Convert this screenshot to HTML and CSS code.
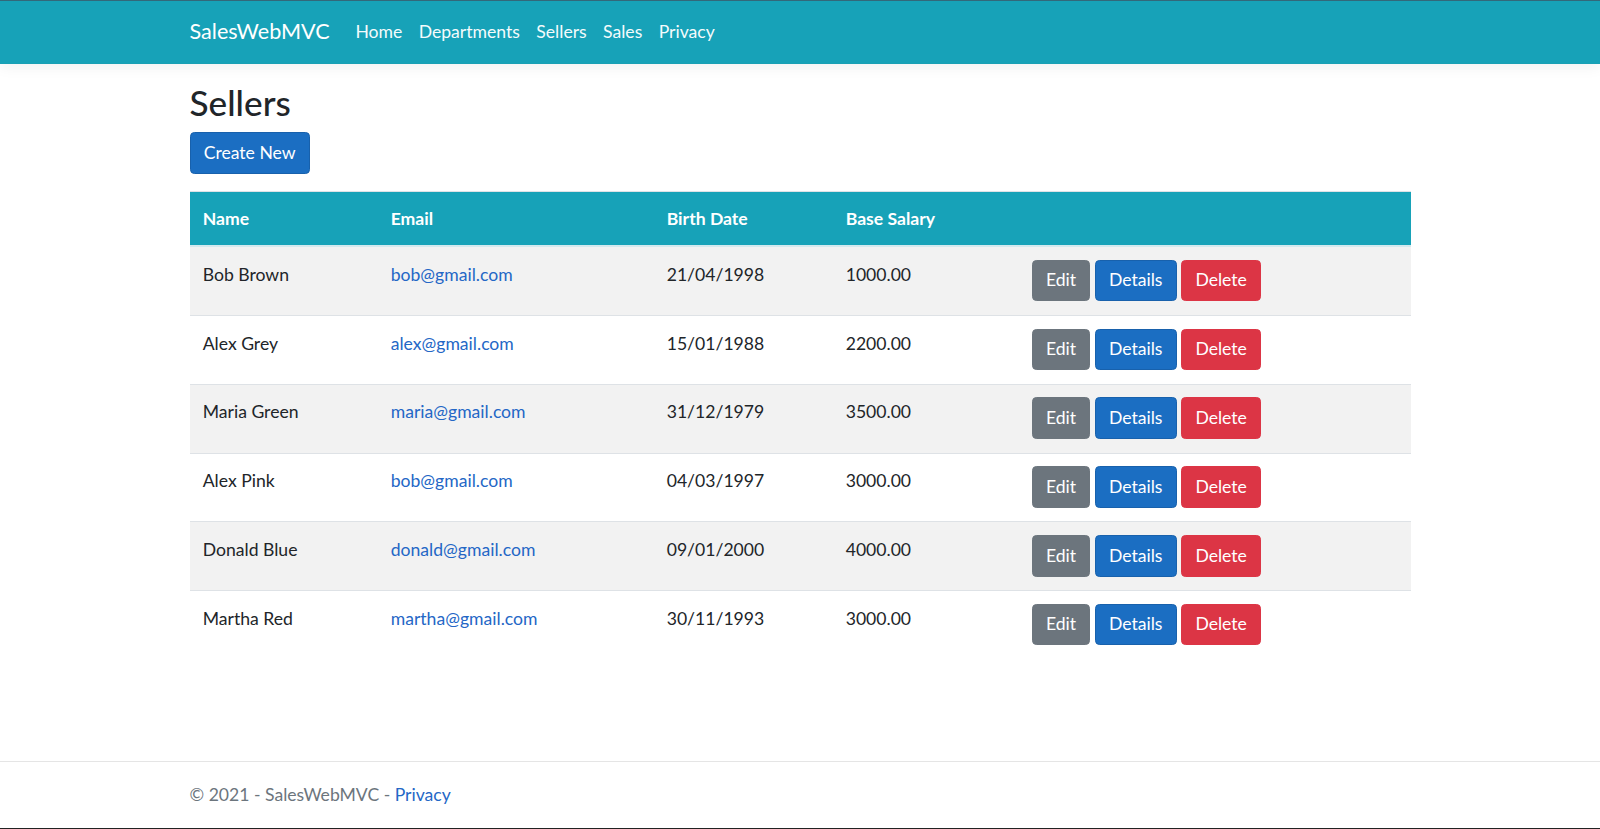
FILE: index.html
```html
<!DOCTYPE html>
<html lang="en">
<head>
    <meta charset="UTF-8">
    <meta name="viewport" content="width=device-width, initial-scale=1.0">
    <title>Sellers - SalesWebMVC</title>
    <link rel="stylesheet" href="styles.css">
</head>
<body>
    <header>
        <nav class="navbar">
            <div class="container navbar-inner">
                <a class="navbar-brand" href="#">SalesWebMVC</a>
                <ul class="navbar-nav">
                    <li><a class="nav-link" href="#">Home</a></li>
                    <li><a class="nav-link" href="#">Departments</a></li>
                    <li><a class="nav-link" href="#">Sellers</a></li>
                    <li><a class="nav-link" href="#">Sales</a></li>
                    <li><a class="nav-link" href="#">Privacy</a></li>
                </ul>
            </div>
        </nav>
    </header>

    <main class="container">
        <h2>Sellers</h2>
        <p class="actions">
            <a class="btn btn-primary" href="#">Create New</a>
        </p>

        <table class="table">
            <thead>
                <tr>
                    <th class="col-name">Name</th>
                    <th class="col-email">Email</th>
                    <th class="col-birth">Birth Date</th>
                    <th class="col-salary">Base Salary</th>
                    <th class="col-actions"></th>
                </tr>
            </thead>
            <tbody>
                <tr>
                    <td>Bob Brown</td>
                    <td><a href="#">bob@gmail.com</a></td>
                    <td>21/04/1998</td>
                    <td>1000.00</td>
                    <td class="cell-actions">
                        <a class="btn btn-secondary" href="#">Edit</a>
                        <a class="btn btn-primary" href="#">Details</a>
                        <a class="btn btn-danger" href="#">Delete</a>
                    </td>
                </tr>
                <tr>
                    <td>Alex Grey</td>
                    <td><a href="#">alex@gmail.com</a></td>
                    <td>15/01/1988</td>
                    <td>2200.00</td>
                    <td class="cell-actions">
                        <a class="btn btn-secondary" href="#">Edit</a>
                        <a class="btn btn-primary" href="#">Details</a>
                        <a class="btn btn-danger" href="#">Delete</a>
                    </td>
                </tr>
                <tr>
                    <td>Maria Green</td>
                    <td><a href="#">maria@gmail.com</a></td>
                    <td>31/12/1979</td>
                    <td>3500.00</td>
                    <td class="cell-actions">
                        <a class="btn btn-secondary" href="#">Edit</a>
                        <a class="btn btn-primary" href="#">Details</a>
                        <a class="btn btn-danger" href="#">Delete</a>
                    </td>
                </tr>
                <tr>
                    <td>Alex Pink</td>
                    <td><a href="#">bob@gmail.com</a></td>
                    <td>04/03/1997</td>
                    <td>3000.00</td>
                    <td class="cell-actions">
                        <a class="btn btn-secondary" href="#">Edit</a>
                        <a class="btn btn-primary" href="#">Details</a>
                        <a class="btn btn-danger" href="#">Delete</a>
                    </td>
                </tr>
                <tr>
                    <td>Donald Blue</td>
                    <td><a href="#">donald@gmail.com</a></td>
                    <td>09/01/2000</td>
                    <td>4000.00</td>
                    <td class="cell-actions">
                        <a class="btn btn-secondary" href="#">Edit</a>
                        <a class="btn btn-primary" href="#">Details</a>
                        <a class="btn btn-danger" href="#">Delete</a>
                    </td>
                </tr>
                <tr>
                    <td>Martha Red</td>
                    <td><a href="#">martha@gmail.com</a></td>
                    <td>30/11/1993</td>
                    <td>3000.00</td>
                    <td class="cell-actions">
                        <a class="btn btn-secondary" href="#">Edit</a>
                        <a class="btn btn-primary" href="#">Details</a>
                        <a class="btn btn-danger" href="#">Delete</a>
                    </td>
                </tr>
            </tbody>
        </table>
    </main>

    <footer class="footer">
        <div class="container">
            &copy; 2021 - SalesWebMVC - <a href="#">Privacy</a>
        </div>
    </footer>
</body>
</html>
```

FILE: styles.css
```css
* {
    box-sizing: border-box;
}

html {
    height: 100%;
}

body {
    margin: 0;
    min-height: 100%;
    display: flex;
    flex-direction: column;
    font-family: "Segoe UI", Lato, "Liberation Sans", sans-serif;
    font-size: 17.6px;
    line-height: 1.5;
    color: #212529;
    background: #fff;
    border-top: 1px solid #33687a;
    border-bottom: 1px solid #222;
}

a {
    color: #2467c6;
    text-decoration: none;
}

.container {
    width: 100%;
    max-width: 1254px;
    margin: 0 auto;
    padding: 0 16.5px;
}

/* Navbar */
.navbar {
    background: #17a2b8;
    padding: 8.8px 0;
    border-bottom: 1px solid #1aa0b4;
    box-shadow: 0 4.4px 13.2px rgba(0, 0, 0, 0.05);
    margin-bottom: 17.6px;
}

.navbar-inner {
    display: flex;
    align-items: center;
}

.navbar-brand {
    color: #fff;
    font-size: 21.6px;
    padding: 5.5px 0;
    margin-right: 17.6px;
    line-height: 33px;
}

.navbar-nav {
    display: flex;
    list-style: none;
    margin: 0;
    padding: 0;
}

.nav-link {
    display: block;
    color: #f4fbfc;
    padding: 8.8px 8.2px;
}

/* Page content */
h2 {
    font-size: 35.2px;
    font-weight: 500;
    line-height: 1.2;
    margin: 0 0 8.8px;
}

.actions {
    margin: 0 0 17.6px;
}

.btn {
    display: inline-block;
    font-size: 17.6px;
    line-height: 26.4px;
    padding: 6.6px 13.2px;
    border: 1px solid transparent;
    border-radius: 4.4px;
    color: #fff;
    vertical-align: middle;
}

.btn-primary {
    background: #1b6ec2;
    border-color: #1861ac;
}

.btn-secondary {
    background: #6c757d;
    border-color: #6c757d;
}

.btn-danger {
    background: #dc3545;
    border-color: #dc3545;
}

/* Table */
.table {
    width: 100%;
    border-collapse: collapse;
    table-layout: fixed;
}

.table th,
.table td {
    padding: 13.2px;
    text-align: left;
    vertical-align: top;
    border-top: 1px solid #dee2e6;
}

.table td {
    padding-top: 14.6px;
    padding-bottom: 11.8px;
}

.table td.cell-actions {
    padding-top: 12.6px;
    padding-bottom: 13.6px;
}

.table thead th {
    background: #17a2b8;
    color: #fff;
    font-weight: 700;
    vertical-align: bottom;
    padding: 14px 13.2px 12.4px;
    border-bottom: 2px solid #d3e9ee;
}

.table tbody tr:nth-child(odd) {
    background: #f2f2f2;
}

.col-name {
    width: 188px;
}

.col-email {
    width: 276px;
}

.col-birth {
    width: 179px;
}

.col-salary {
    width: 186px;
}

/* Footer */
.footer {
    margin-top: auto;
    border-top: 1px solid #e5e5e5;
    line-height: 66px;
    color: #6c757d;
    white-space: nowrap;
}
```
